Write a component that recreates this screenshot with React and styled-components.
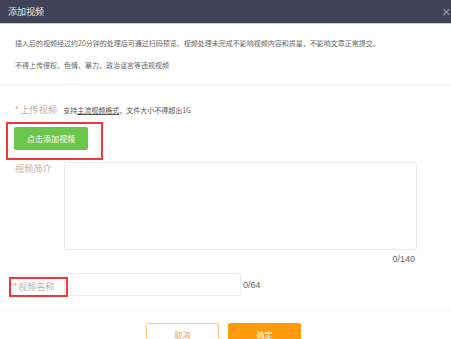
import React from 'react';
import styled, { createGlobalStyle } from 'styled-components';

const GlobalStyle = createGlobalStyle`
  html, body {
    margin: 0;
    padding: 0;
    background: #fff;
  }
  body {
    font-family: "Liberation Sans", "Noto Sans CJK SC", sans-serif;
  }
`;

const App = () => {
  return (
    <Dialog>
      <GlobalStyle />
      <Header>
        <Title>添加视频</Title>
        <Close>×</Close>
      </Header>

      <Notice>
        <NoticeLine>插入后的视频经过约20分钟的处理后可通过扫码预览。视频处理未完成不影响视频内容和质量，不影响文章正常提交。</NoticeLine>
        <NoticeLine>不得上传侵权、色情、暴力、政治谣言等违规视频</NoticeLine>
      </Notice>

      <Form>
        <UploadRow>
          <Label>
            <Star>*</Star>上传视频
          </Label>
          <Hint>
            支持<u>主流视频格式</u>，文件大小不得超出1G
          </Hint>
        </UploadRow>

        <Marked>
          <GreenButton>点击添加视频</GreenButton>
        </Marked>

        <DescRow>
          <Label $w="44px">视频简介</Label>
          <TextArea />
        </DescRow>
        <Counter>0/140</Counter>

        <NameRow>
          <NameLabel>
            <Star>*</Star>视频名称
          </NameLabel>
          <NameInput />
          <SmallCount>0/64</SmallCount>
        </NameRow>
      </Form>

      <Footer>
        <Button>取消</Button>
        <Button $primary>确定</Button>
      </Footer>
    </Dialog>
  );
};

const Dialog = styled.div`
  width: 451px;
  height: 339px;
  overflow: hidden;
  background: #fff;
`;

const Header = styled.div`
  height: 23px;
  background: #3f4355;
  border-bottom: 1px solid #c9cacd;
  display: flex;
  align-items: center;
  justify-content: space-between;
  padding: 0 0 0 8px;
`;

const Title = styled.span`
  color: #e6e7ea;
  font-size: 9px;
  font-family: "Noto Sans CJK SC", sans-serif;
`;

const Close = styled.span`
  color: #9a9da8;
  font-size: 15px;
  line-height: 15px;
  width: 9px;
  margin-top: -1px;
`;

const Notice = styled.div`
  padding: 13px 15px 13px 15px;
  border-bottom: 1px solid #eeeeee;
  display: flex;
  flex-direction: column;
  gap: 10px;
`;

const NoticeLine = styled.div`
  font-size: 7px;
  line-height: 12px;
  color: #666;
  white-space: nowrap;
  font-family: "Noto Sans CJK SC", sans-serif;
`;

const Form = styled.div`
  display: flex;
  flex-direction: column;
`;

const UploadRow = styled.div`
  display: flex;
  align-items: center;
  margin: 18px 0 0 15px;
  height: 14px;
  gap: 6px;
`;

const Label = styled.span`
  font-size: 9px;
  line-height: 14px;
  color: #b4b4b4;
  width: ${(p) => p.$w || 'auto'};
  flex-shrink: 0;
  white-space: nowrap;
  font-family: "Noto Sans CJK SC", sans-serif;
  letter-spacing: 0.2px;
`;

const Star = styled.span`
  color: #f5a06a;
  margin-right: 1px;
`;

const Hint = styled.span`
  font-size: 7px;
  color: #555;
  white-space: nowrap;
  font-family: "Noto Sans CJK SC", sans-serif;
`;

const Marked = styled.div`
  margin: 5px 0 0 6px;
  width: 87px;
  height: 31px;
  border: 2px solid #f0383c;
  padding: 3px 0 0 6px;
  box-sizing: content-box;
`;

const GreenButton = styled.div`
  width: 74px;
  height: 23px;
  background: #6cc64e;
  border-radius: 2px;
  color: #fff;
  font-size: 8px;
  display: flex;
  align-items: center;
  justify-content: center;
  font-family: "Noto Sans CJK SC", sans-serif;
`;

const DescRow = styled.div`
  display: flex;
  align-items: flex-start;
  margin: 2px 0 0 15px;
  gap: 5px;
`;

const TextArea = styled.div`
  width: 351px;
  height: 86px;
  border: 1px solid #ececec;
  border-radius: 2px;
`;

const Counter = styled.div`
  align-self: flex-end;
  margin: 3px 36px 0 0;
  font-size: 9px;
  line-height: 12px;
  color: #666;
`;

const NameRow = styled.div`
  display: flex;
  align-items: center;
  margin: 8px 0 0 9px;
`;

const NameLabel = styled.span`
  position: relative;
  font-size: 9px;
  color: #b4b4b4;
  line-height: 16px;
  height: 16px;
  padding: 0 0 0 4px;
  width: 55px;
  box-sizing: border-box;
  margin-top: 4px;
  white-space: nowrap;
  font-family: "Noto Sans CJK SC", sans-serif;
  z-index: 1;

  &::after {
    content: '';
    position: absolute;
    left: 0;
    top: -2px;
    width: 59px;
    height: 20px;
    border: 2px solid #f0383c;
    box-sizing: border-box;
  }
`;

const NameInput = styled.div`
  width: 175px;
  height: 21px;
  border: 1px solid #ececec;
  border-radius: 2px;
`;

const SmallCount = styled.span`
  font-size: 9px;
  color: #666;
  margin-left: 2px;
`;

const Footer = styled.div`
  margin-top: 14px;
  border-top: 1px solid #f2f2f2;
  padding: 12px 0 0 146px;
  display: flex;
  gap: 9px;
`;

const Button = styled.div`
  width: 73px;
  height: 22px;
  box-sizing: border-box;
  border-radius: 2px;
  border: 1px solid ${(p) => (p.$primary ? '#ff9a0d' : '#ffc88a')};
  background: ${(p) => (p.$primary ? '#ff9a0d' : '#fff')};
  color: ${(p) => (p.$primary ? '#fff' : '#ff9a3c')};
  font-size: 8px;
  display: flex;
  align-items: center;
  justify-content: center;
  font-family: "Noto Sans CJK SC", sans-serif;
`;

export default App;
